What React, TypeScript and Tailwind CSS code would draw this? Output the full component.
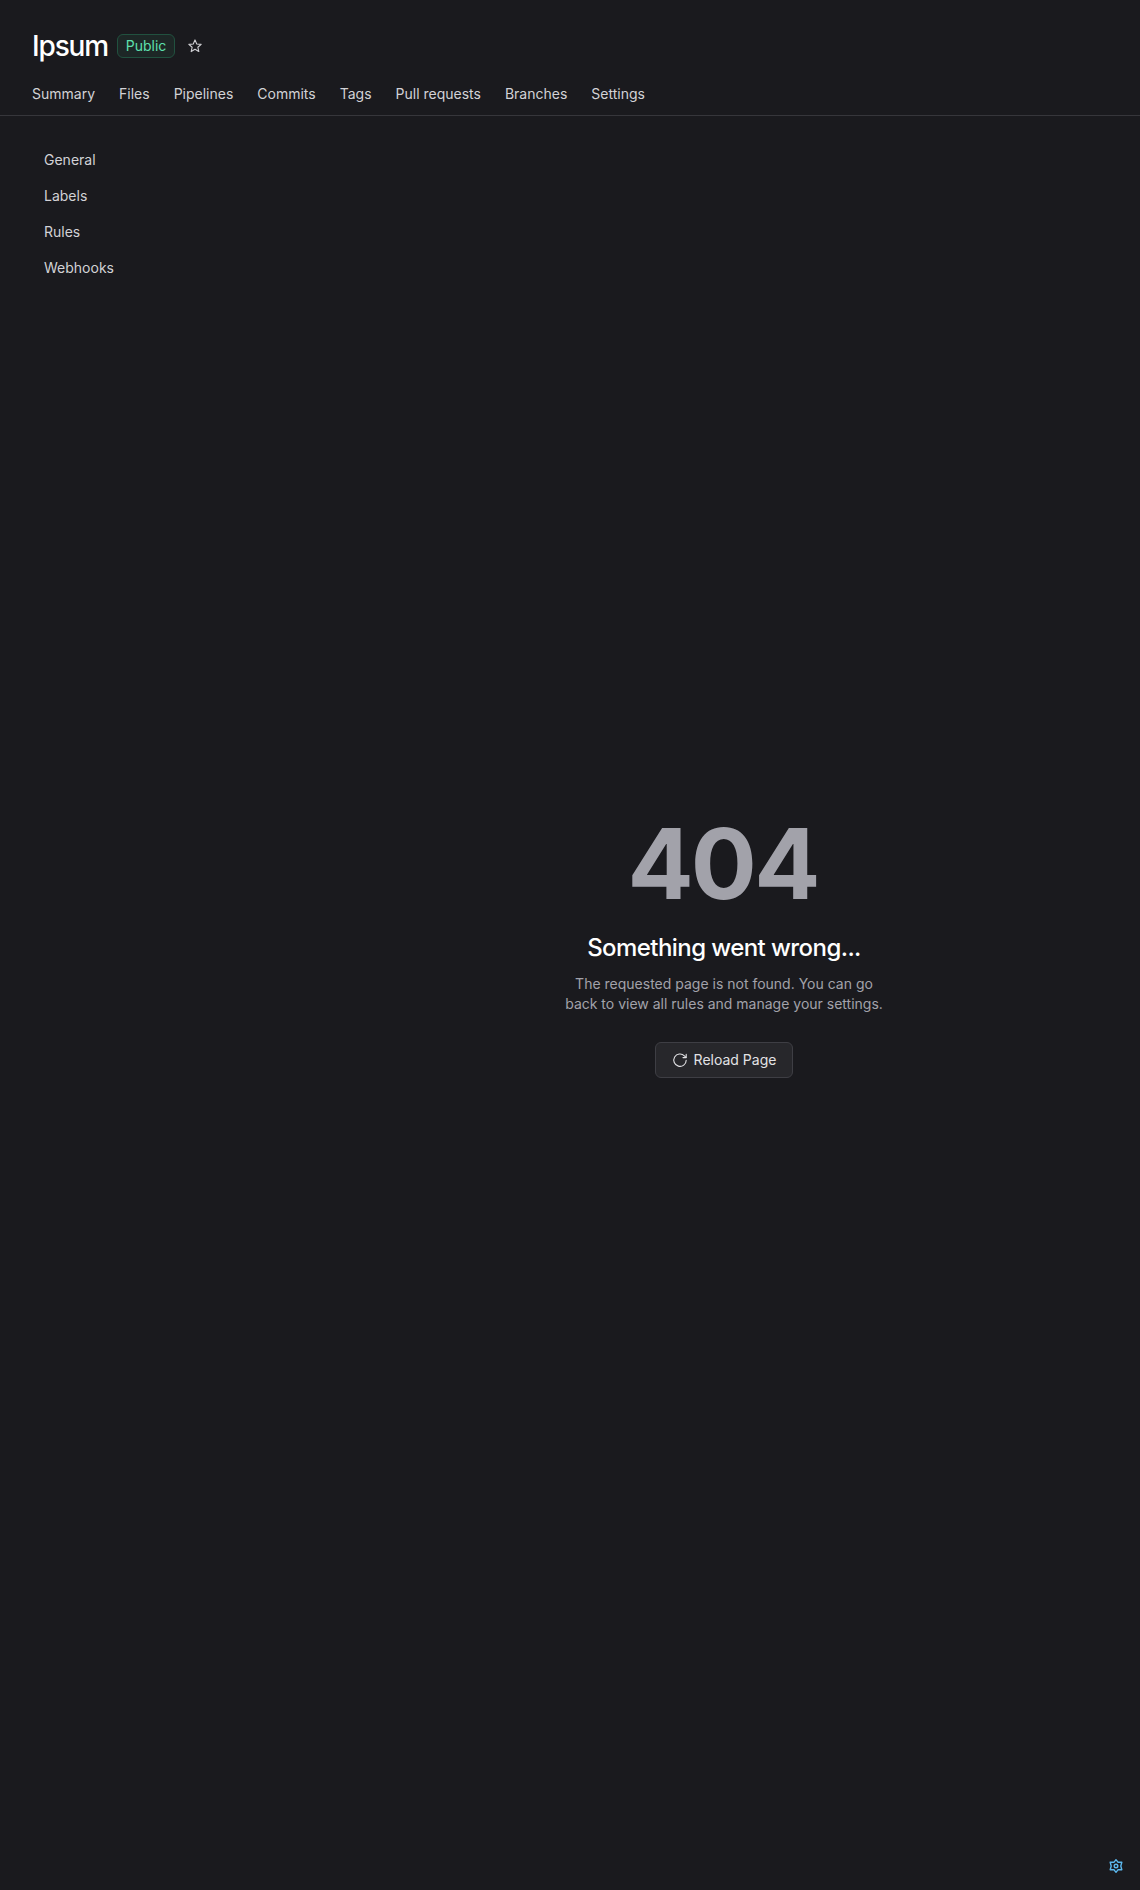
import React from 'react';

const tabs = ['Summary', 'Files', 'Pipelines', 'Commits', 'Tags', 'Pull requests', 'Branches', 'Settings'];
const sections = ['General', 'Labels', 'Rules', 'Webhooks'];

function StarIcon() {
  return (
    <svg width="16" height="16" viewBox="0 0 16 16" fill="none" stroke="currentColor" strokeWidth="1.1" strokeLinejoin="round">
      <path d="M8 1.9l1.75 4.05 4.4.4-3.3 2.9.97 4.3L8 11.27l-3.82 2.28.97-4.3-3.3-2.9 4.4-.4z" />
    </svg>
  );
}

function ReloadIcon() {
  return (
    <svg width="16" height="16" viewBox="0 0 16 16" fill="none" stroke="currentColor" strokeWidth="1.1" strokeLinecap="round" strokeLinejoin="round">
      <path d="M14.2 8.2A6.2 6.2 0 1 1 12.4 3.8L14 5.4" />
      <path d="M14.2 2.4V5.6H11" />
    </svg>
  );
}

function GearIcon() {
  return (
    <svg width="16" height="16" viewBox="0 0 16 16" fill="none" stroke="currentColor" strokeWidth="1.4" strokeLinejoin="round">
      <path d="M8 1.7L9.9 4.2L13.8 4.2L12.8 8L13.8 11.8L9.9 11.8L8 14.3L6.1 11.8L2.2 11.8L3.2 8L2.2 4.2L6.1 4.2Z" />
      <circle cx="8" cy="8" r="1.8" />
    </svg>
  );
}

export default function App() {
  return (
    <div className="flex h-[1890px] flex-col bg-[#1a1a1e] font-[Inter,sans-serif] text-sm text-[#d2d2d6]">
      <header className="h-[116px] shrink-0 border-b border-[#36363b] px-8">
        <div className="mt-8 flex h-7 items-center">
          <h1 className="w-[77px] text-[28px] leading-7 font-medium tracking-[-1.15px] whitespace-nowrap text-white">Ipsum</h1>
          <span className="ml-2 flex h-6 w-[58px] items-center justify-center rounded-md border border-[#21513f] bg-[#1d2726] text-[#5ee0ad]">Public</span>
          <button className="ml-3"><StarIcon /></button>
        </div>
        <nav className="mt-6 flex gap-6 leading-5">
          {tabs.map((tab) => <a key={tab}>{tab}</a>)}
        </nav>
      </header>
      <div className="flex flex-1">
        <aside className="flex w-[308px] flex-col pt-[26px] pl-11">
          {sections.map((item) => <a key={item} className="flex h-9 items-center">{item}</a>)}
        </aside>
        <main className="flex flex-1 flex-col items-center pt-[706px]">
          <div className="pr-[3px] text-[98px] leading-[84px] font-bold tracking-[-2.8px] text-[#a2a2aa]">404</div>
          <h2 className="mt-[26px] text-2xl leading-8 font-medium tracking-[-0.57px] text-white">Something went wrong...</h2>
          <p className="mt-[10px] w-[322px] text-center leading-5 text-[#a2a2aa]">The requested page is not found. You can go back to view all rules and manage your settings.</p>
          <button className="mt-7 flex h-9 items-center gap-1.5 rounded-md border border-[#3e3e44] bg-[#27272b] px-4 text-[#e2e2e5]"><ReloadIcon />Reload Page</button>
        </main>
      </div>
      <button className="absolute top-[1858px] left-[1108px] text-[#5cb8ee]"><GearIcon /></button>
    </div>
  );
}
